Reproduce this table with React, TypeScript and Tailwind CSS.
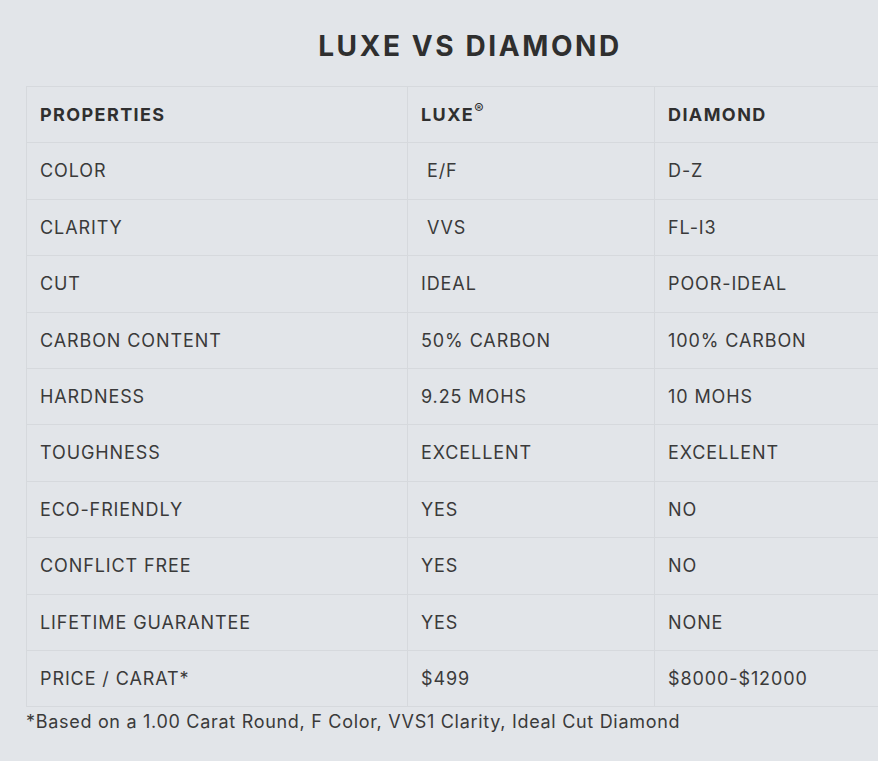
const rows: [string, string, string][] = [
  ['COLOR', '\u00a0E/F', 'D-Z'],
  ['CLARITY', '\u00a0VVS', 'FL-I3'],
  ['CUT', 'IDEAL', 'POOR-IDEAL'],
  ['CARBON CONTENT', '50% CARBON', '100% CARBON'],
  ['HARDNESS', '9.25 MOHS', '10 MOHS'],
  ['TOUGHNESS', 'EXCELLENT', 'EXCELLENT'],
  ['ECO-FRIENDLY', 'YES', 'NO'],
  ['CONFLICT FREE', 'YES', 'NO'],
  ['LIFETIME GUARANTEE', 'YES', 'NONE'],
  ['PRICE / CARAT*', '$499', '$8000-$12000'],
];

const cell = 'border border-[#d6d9dd] px-[13px] py-[15px] text-left align-middle leading-[25.4px]';

export default function App() {
  return (
    <div className="min-h-[761px] w-full overflow-hidden bg-[#e2e5e9] font-['Inter',sans-serif] text-[#3a3a3a]">
      <div className="w-[940px]">
        <h2 className="pt-[29px] pb-[23px] text-center text-[28px] font-bold leading-[34px] tracking-[2.6px] text-[#2f2f2f]">
          LUXE VS DIAMOND
        </h2>
        <div className="pl-[26px]">
          <table className="w-[952px] table-fixed border-collapse text-[18px] tracking-[0.9px]">
            <colgroup>
              <col className="w-[381px]" />
              <col className="w-[247px]" />
              <col className="w-[324px]" />
            </colgroup>
            <thead>
              <tr className="font-bold tracking-[1.4px] text-[#2f2f2f]">
                <th className={cell}>PROPERTIES</th>
                <th className={cell}>
                  LUXE<sup className="text-[14px] font-medium tracking-normal">®</sup>
                </th>
                <th className={cell}>DIAMOND</th>
              </tr>
            </thead>
            <tbody>
              {rows.map(([p, l, d]) => (
                <tr key={p}>
                  <td className={cell}>{p}</td>
                  <td className={cell}>{l}</td>
                  <td className={cell}>{d}</td>
                </tr>
              ))}
            </tbody>
          </table>
          <p className="pt-[2px] text-[18px] leading-[26px] tracking-[0.7px]">
            *Based on a 1.00 Carat Round, F Color, VVS1 Clarity, Ideal Cut Diamond
          </p>
        </div>
      </div>
    </div>
  );
}
